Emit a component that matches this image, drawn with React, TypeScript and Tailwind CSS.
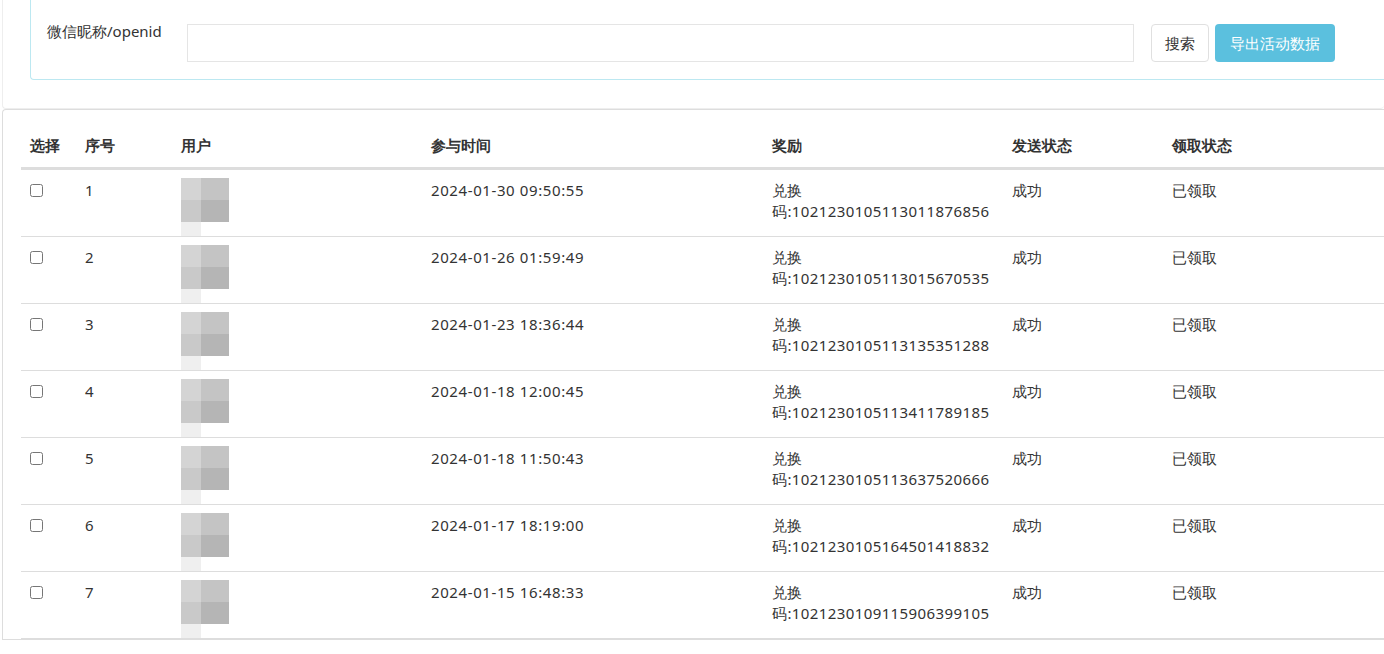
const rows = [
  ['1', '2024-01-30 09:50:55', '1021230105113011876856'],
  ['2', '2024-01-26 01:59:49', '1021230105113015670535'],
  ['3', '2024-01-23 18:36:44', '1021230105113135351288'],
  ['4', '2024-01-18 12:00:45', '1021230105113411789185'],
  ['5', '2024-01-18 11:50:43', '1021230105113637520666'],
  ['6', '2024-01-17 18:19:00', '1021230105164501418832'],
  ['7', '2024-01-15 16:48:33', '1021230109115906399105'],
]

function Avatar() {
  // mosaic-blurred avatar as in the screenshot
  return (
    <div className="flex">
      <div className="flex flex-col">
        <div className="w-[20px] h-[22px] bg-[#d4d4d4]" />
        <div className="w-[20px] h-[22px] bg-[#c9c9c9]" />
        <div className="w-[20px] h-[14px] bg-[#efefef]" />
      </div>
      <div className="flex flex-col">
        <div className="w-[28px] h-[22px] bg-[#c4c4c4]" />
        <div className="w-[28px] h-[22px] bg-[#b5b5b5]" />
      </div>
    </div>
  )
}

export default function App() {
  return (
    <div className="min-h-[654px] bg-white text-[#333] text-[15px] font-['Noto_Sans_CJK_SC','Noto_Sans',sans-serif] overflow-hidden">
      <div className="ml-[2px] pl-[27px] pb-[28px] rounded-b border border-t-0 border-r-0 border-[#eee]">
        <div className="flex items-start border border-t-0 border-r-0 border-[#bce8f1] rounded-bl h-[80px] pl-[16px] pr-[49px]">
          <div className="pt-[20px] w-[140px] leading-[22px] text-[15px]">微信昵称/openid</div>
          <div className="mt-[24px] flex-1 h-[38px] border border-[#e5e5e5]" />
          <button className="mt-[24px] ml-[17px] h-[38px] px-[13px] border border-[#e0e0e0] rounded-sm bg-white text-[15px]">搜索</button>
          <button className="mt-[24px] ml-[6px] h-[38px] px-[15px] rounded-sm bg-[#5bc0de] text-white text-[15px]">导出活动数据</button>
        </div>
      </div>
      <div className="ml-[2px] border border-r-0 border-[#ddd] rounded-tl pl-[18px] pt-[24px]">
        <table className="w-full table-fixed border-collapse">
          <thead>
            <tr className="border-b-[3px] border-[#ddd] text-left">
              <th className="w-[56px] pl-[9px] h-[34px] align-top font-bold">选择</th>
              <th className="w-[95px] pl-[8px] align-top font-bold">序号</th>
              <th className="w-[250px] pl-[9px] align-top font-bold">用户</th>
              <th className="w-[341px] pl-[9px] align-top font-bold">参与时间</th>
              <th className="w-[240px] pl-[9px] align-top font-bold">奖励</th>
              <th className="w-[160px] pl-[9px] align-top font-bold">发送状态</th>
              <th className="pl-[9px] align-top font-bold">领取状态</th>
            </tr>
          </thead>
          <tbody>
            {rows.map(([n, t, code]) => (
              <tr key={n} className="border-b border-[#ddd] align-top leading-[21px]">
                <td className="pl-[9px] pt-[11px] pb-[16px]">
                  <input type="checkbox" className="w-[13px] h-[13px] mt-[3px]" />
                </td>
                <td className="pl-[8px] pt-[10px] tracking-[0.5px]">{n}</td>
                <td className="pl-[9px] pt-[8px]"><Avatar /></td>
                <td className="pl-[9px] pt-[10px] tracking-[0.6px]">{t}</td>
                <td className="pl-[9px] pt-[10px] break-all tracking-[0.4px]">兑换<br />码:{code}</td>
                <td className="pl-[9px] pt-[10px]">成功</td>
                <td className="pl-[9px] pt-[10px]">已领取</td>
              </tr>
            ))}
          </tbody>
        </table>
      </div>
    </div>
  )
}
